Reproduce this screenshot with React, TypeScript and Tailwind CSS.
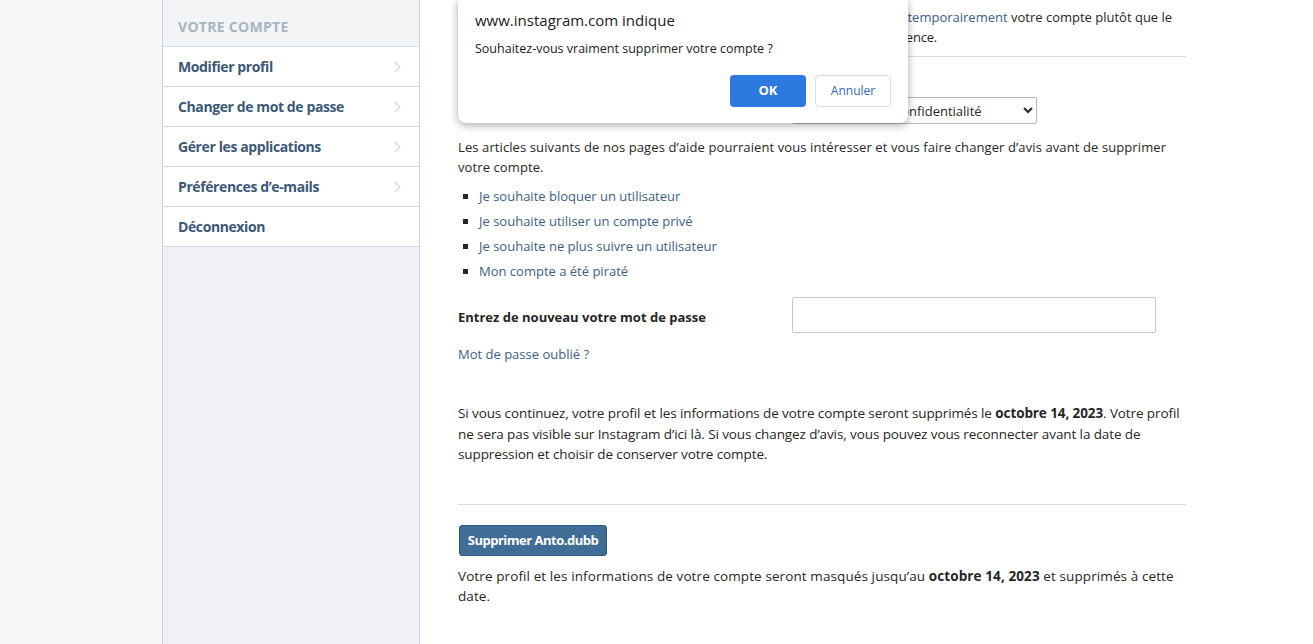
import { ReactNode } from 'react'

const menu = [
  { label: 'Modifier profil', arrow: true },
  { label: 'Changer de mot de passe', arrow: true },
  { label: 'Gérer les applications', arrow: true },
  { label: 'Préférences d’e-mails', arrow: true },
  { label: 'Déconnexion', arrow: false },
]

const articles = [
  'Je souhaite bloquer un utilisateur',
  'Je souhaite utiliser un compte privé',
  'Je souhaite ne plus suivre un utilisateur',
  'Mon compte a été piraté',
]

function Chevron() {
  return (
    <svg width="7" height="12" viewBox="0 0 7 12" className="text-[#cfd5db]">
      <polyline points="1,1 6,6 1,11" fill="none" stroke="currentColor" strokeWidth="1.2" />
    </svg>
  )
}

function Link({ children }: { children: ReactNode }) {
  return <a className="text-[#3b6088] cursor-pointer">{children}</a>
}

export default function App() {
  return (
    <div
      className="relative flex w-full h-[644px] overflow-hidden bg-white text-[#262626]"
      style={{ fontFamily: '"Open Sans", "Liberation Sans", sans-serif' }}
    >
      {/* left gutter */}
      <div className="w-[162px] shrink-0 bg-[#f6f7f8]" />

      {/* sidebar */}
      <aside className="w-[258px] shrink-0 flex flex-col bg-[#eff1f4] border-x border-[#c9d3dd]">
        <div className="h-[47px] px-[15px] pt-[7px] flex items-center bg-[#f3f4f6] border-b border-[#d3dbe3]">
          <span className="text-[14px] font-bold uppercase text-[#a8b5c2] tracking-[0.3px]">Votre compte</span>
        </div>
        {menu.map((m) => (
          <div
            key={m.label}
            className="h-[40px] px-[15px] flex items-center justify-between bg-white border-b border-[#d3dbe3]"
          >
            <span className="text-[14px] font-bold text-[#3b5877] tracking-[-0.4px]">{m.label}</span>
            {m.arrow && (
              <span className="mr-[3px]">
                <Chevron />
              </span>
            )}
          </div>
        ))}
      </aside>

      {/* main */}
      <main className="flex-1 bg-white">
        <div className="w-[728px] ml-[38px] pt-[7px] text-[13px] leading-[20px]">
          <p className="whitespace-nowrap">
            <span className="tracking-[-0.13px]">
              Si vous avez simplement besoin de faire une pause, vous pouvez désactiver{' '}
            </span>
            <Link>temporairement</Link> votre compte plutôt que le
            <br />
            <span className="tracking-[-0.2px]">
              supprimer. Nous sommes désolés de ne pas vous offrir une meilleure expérience.
            </span>
          </p>
          <div className="mt-[9px] border-t border-[#dbdbdb]" />

          <div className="mt-[40px] flex items-center">
            <label className="w-[334px] font-bold">Pourquoi supprimez-vous votre compte ?</label>
            <select className="w-[245px] h-[27px] pl-[11px] pr-[5px] border border-[#b8b8b8] rounded-[2px] bg-white text-[13px] text-[#262626]">
              <option>Problèmes de confidentialité</option>
            </select>
          </div>

          <p className="mt-[13px] tracking-[0.1px] whitespace-nowrap">
            Les articles suivants de nos pages d’aide pourraient vous intéresser et vous faire changer d’avis avant de supprimer
            <br />
            votre compte.
          </p>
          <ul className="mt-[7px] leading-[25px]">
            {articles.map((a) => (
              <li key={a} className="flex items-center">
                <span className="w-[5px] h-[5px] bg-[#262626] ml-[5px] mr-[11px]" />
                <Link>{a}</Link>
              </li>
            ))}
          </ul>

          <div className="mt-[13px] flex items-center">
            <label className="w-[334px] font-bold pt-[3px]">Entrez de nouveau votre mot de passe</label>
            <input
              type="password"
              className="w-[364px] h-[36px] border border-[#c8c8c8] rounded-[2px] bg-white px-2"
            />
          </div>
          <p className="mt-[11px]">
            <Link>Mot de passe oublié ?</Link>
          </p>

          <p className="mt-[39px] leading-[20.5px] text-[13.5px] tracking-[-0.1px] whitespace-nowrap">
            Si vous continuez, votre profil et les informations de votre compte seront supprimés le{' '}
            <b>octobre 14, 2023</b>. Votre profil
            <br />
            ne sera pas visible sur Instagram d’ici là. Si vous changez d’avis, vous pouvez vous reconnecter avant la date de
            <br />
            suppression et choisir de conserver votre compte.
          </p>
          <div className="mt-[39px] border-t border-[#dbdbdb]" />

          <button className="mt-[20px] ml-[1px] w-[148px] h-[31px] rounded-[3px] bg-[#3f6d95] border border-[#2e5a80] text-white text-[13px] font-bold tracking-[-0.5px]">
            Supprimer Anto.dubb
          </button>
          <p className="mt-[10px] text-[13.5px] tracking-[0.1px] whitespace-nowrap">
            Votre profil et les informations de votre compte seront masqués jusqu’au <b>octobre 14, 2023</b> et supprimés à
            cette
            <br />
            date.
          </p>
        </div>
      </main>

      {/* browser confirm dialog */}
      <div className="absolute left-[458px] top-0 w-[450px] h-[123px] bg-white rounded-b-[8px] shadow-[0_2px_8px_rgba(0,0,0,0.35)] px-[17px] pt-[9px]">
        <div className="text-[15px] leading-[22px] text-[#202124]">www.instagram.com indique</div>
        <div className="mt-[9px] text-[12.5px] leading-[18px] text-[#202124]">Souhaitez-vous vraiment supprimer votre compte ?</div>
        <div className="mt-[17px] flex justify-end gap-[9px]">
          <button className="w-[76px] h-[32px] rounded-[4px] bg-[#2c7ae0] text-white text-[13px] font-bold">OK</button>
          <button className="w-[76px] h-[32px] rounded-[4px] bg-white border border-[#dadce0] text-[#2f66c2] text-[12px]">
            Annuler
          </button>
        </div>
      </div>
    </div>
  )
}
